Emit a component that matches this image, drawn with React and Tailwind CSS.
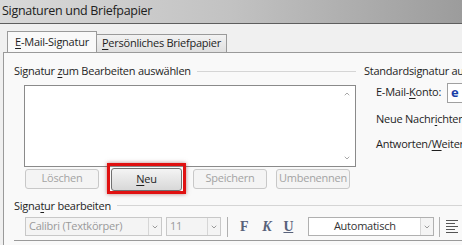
import { ChevronDown, ChevronUp } from "lucide-react";

const font = { fontFamily: '"Open Sans", "Noto Sans", sans-serif' };
const serif = { fontFamily: '"Liberation Serif", serif', fontSize: 14 };

function U({ children }) {
  return <span className="underline underline-offset-2">{children}</span>;
}

function Btn({ children, active }) {
  return (
    <div
      className={
        active
          ? "flex h-[23px] w-[71px] items-center justify-center rounded-[3px] border border-[#707070] bg-gradient-to-b from-[#f4f4f4] to-[#d8d8d8] text-[#1e1e1e]"
          : "mt-[1px] flex h-[20px] w-[74px] items-center justify-center rounded-[3px] border border-[#c8c8c8] bg-[#f4f4f4] text-[#a3a3a3]"
      }
    >
      {children}
    </div>
  );
}

function Arrow() {
  return (
    <div className="flex h-full w-[13px] items-center justify-center border-l border-[#d6d6d6] bg-[#f4f4f4]">
      <ChevronDown className="h-[8px] w-[8px] text-[#9a9a9a]" strokeWidth={3} />
    </div>
  );
}

export default function App() {
  return (
    <div
      className="flex h-[245px] w-[462px] flex-col overflow-hidden bg-[#f0f0f0] text-[11px] tracking-[-0.25px] text-[#1e1e1e]"
      style={font}
    >
      {/* title bar */}
      <div className="flex h-[24px] shrink-0 items-center border-b border-[#5e5e5e] bg-gradient-to-r from-[#d9d9d9] via-[#c2c2c2] to-[#9c9c9c] pl-[2px] text-[12.5px] tracking-[-0.3px] text-[#202020]">
        Signaturen und Briefpapier
      </div>

      {/* tabs */}
      <div className="flex h-[28px] shrink-0 items-end whitespace-nowrap pl-[7px]">
        <div className="flex h-[21px] w-[90px] items-center justify-center border border-b-0 border-[#9a9a9a] bg-[#f9f9f9]">
          <U>E</U>-Mail-Signatur
        </div>
        <div className="flex h-[18px] w-[130px] items-center justify-center border border-b-0 border-l-0 border-[#9a9a9a] bg-gradient-to-b from-[#f2f2f2] to-[#e0e0e0]">
          <U>P</U>ersönliches Briefpapier
        </div>
      </div>

      {/* panel */}
      <div className="relative ml-[3px] flex flex-1 flex-col border-l border-t border-[#9a9a9a] bg-[#f9f9f9] pl-[10px]">
        <div className="flex">
          {/* left column */}
          <div className="flex w-[342px] shrink-0 flex-col">
            <div className="mt-[10px] flex items-center gap-[6px]">
              <span className="whitespace-nowrap">
                Signatur <U>z</U>um Bearbeiten auswählen
              </span>
              <div className="h-px flex-1 bg-[#d5d5d5]" />
            </div>
            <div className="ml-[10px] mt-[5px] flex h-[82px] justify-end border border-[#8a8a8a] bg-white">
              <div className="flex w-[16px] flex-col items-center justify-between py-[4px]">
                <ChevronUp className="h-[8px] w-[8px] text-[#a8a8a8]" strokeWidth={3} />
                <ChevronDown className="h-[8px] w-[8px] text-[#a8a8a8]" strokeWidth={3} />
              </div>
            </div>
            <div className="ml-[11px] mt-[1px] flex h-[23px] items-start">
              <Btn>Löschen</Btn>
              <div className="ml-[12px]">
                <Btn active>
                  <U>N</U>eu
                </Btn>
              </div>
              <div className="ml-[11px]">
                <Btn>Speichern</Btn>
              </div>
              <div className="ml-[9px]">
                <Btn>
                  <span className="px-[2px]">Umbenennen</span>
                </Btn>
              </div>
            </div>
          </div>

          {/* right column */}
          <div className="ml-[8px] flex flex-col whitespace-nowrap">
            <div className="mt-[10px]">Standardsignatur auswählen</div>
            <div className="ml-[12px] mt-[3px] flex items-center gap-[6px]">
              <span>
                E-Mail-<U>K</U>onto:
              </span>
              <div className="flex h-[20px] w-[40px] items-center border border-[#a0a0a0] bg-white pl-[3px] text-[13px] font-bold text-[#1a3fa8]">
                e
              </div>
            </div>
            <div className="ml-[12px] mt-[8px]">
              Neue Nachr<U>i</U>chten:
            </div>
            <div className="ml-[12px] mt-[9px]">
              Antworten/<U>W</U>eiterleitungen:
            </div>
          </div>
        </div>

        <div className="mt-[7px] flex items-center gap-[6px]">
          <span className="whitespace-nowrap">
            Signa<U>t</U>ur bearbeiten
          </span>
          <div className="h-px flex-1 bg-[#d5d5d5]" />
        </div>

        {/* toolbar */}
        <div className="ml-[11px] mt-[3px] flex h-[19px] items-center">
          <div className="flex h-full w-[137px] items-center border border-[#c8c8c8] bg-[#f4f4f4] text-[#9a9a9a]">
            <span className="flex-1 pl-[3px]">Calibri (Textkörper)</span>
            <Arrow />
          </div>
          <div className="ml-[4px] flex h-full w-[55px] items-center border border-[#c8c8c8] bg-[#f4f4f4] text-[#9a9a9a]">
            <span className="flex-1 pl-[3px]">11</span>
            <Arrow />
          </div>
          <div className="ml-[6px] h-[20px] w-px bg-[#b0b0b0]" />
          <span className="ml-[12px] font-bold text-[#58627a]" style={serif}>
            F
          </span>
          <span className="ml-[14px] font-bold italic text-[#58627a]" style={serif}>
            K
          </span>
          <span className="ml-[12px] font-bold text-[#58627a] underline" style={serif}>
            U
          </span>
          <div className="ml-[15px] flex h-full w-[126px] items-center border border-[#b0b0b0] bg-white">
            <span className="flex-1 text-center text-[#333]">Automatisch</span>
            <Arrow />
          </div>
          <div className="ml-[5px] h-[20px] w-px bg-[#b0b0b0]" />
          <div className="ml-[6px] flex flex-col gap-[2px]">
            <div className="h-px w-[12px] bg-[#555]" />
            <div className="h-px w-[9px] bg-[#555]" />
            <div className="h-px w-[12px] bg-[#555]" />
            <div className="h-px w-[9px] bg-[#555]" />
            <div className="h-px w-[12px] bg-[#555]" />
          </div>
        </div>
        <div className="mt-[4px] h-px bg-[#9a9a9a]" />

        {/* highlight overlay */}
        <div className="pointer-events-none absolute left-[103px] top-[110px] h-[31px] w-[79px] border-[3px] border-[#e01010] shadow-[0_0_4px_rgba(120,0,0,0.5)]" />
      </div>
    </div>
  );
}
